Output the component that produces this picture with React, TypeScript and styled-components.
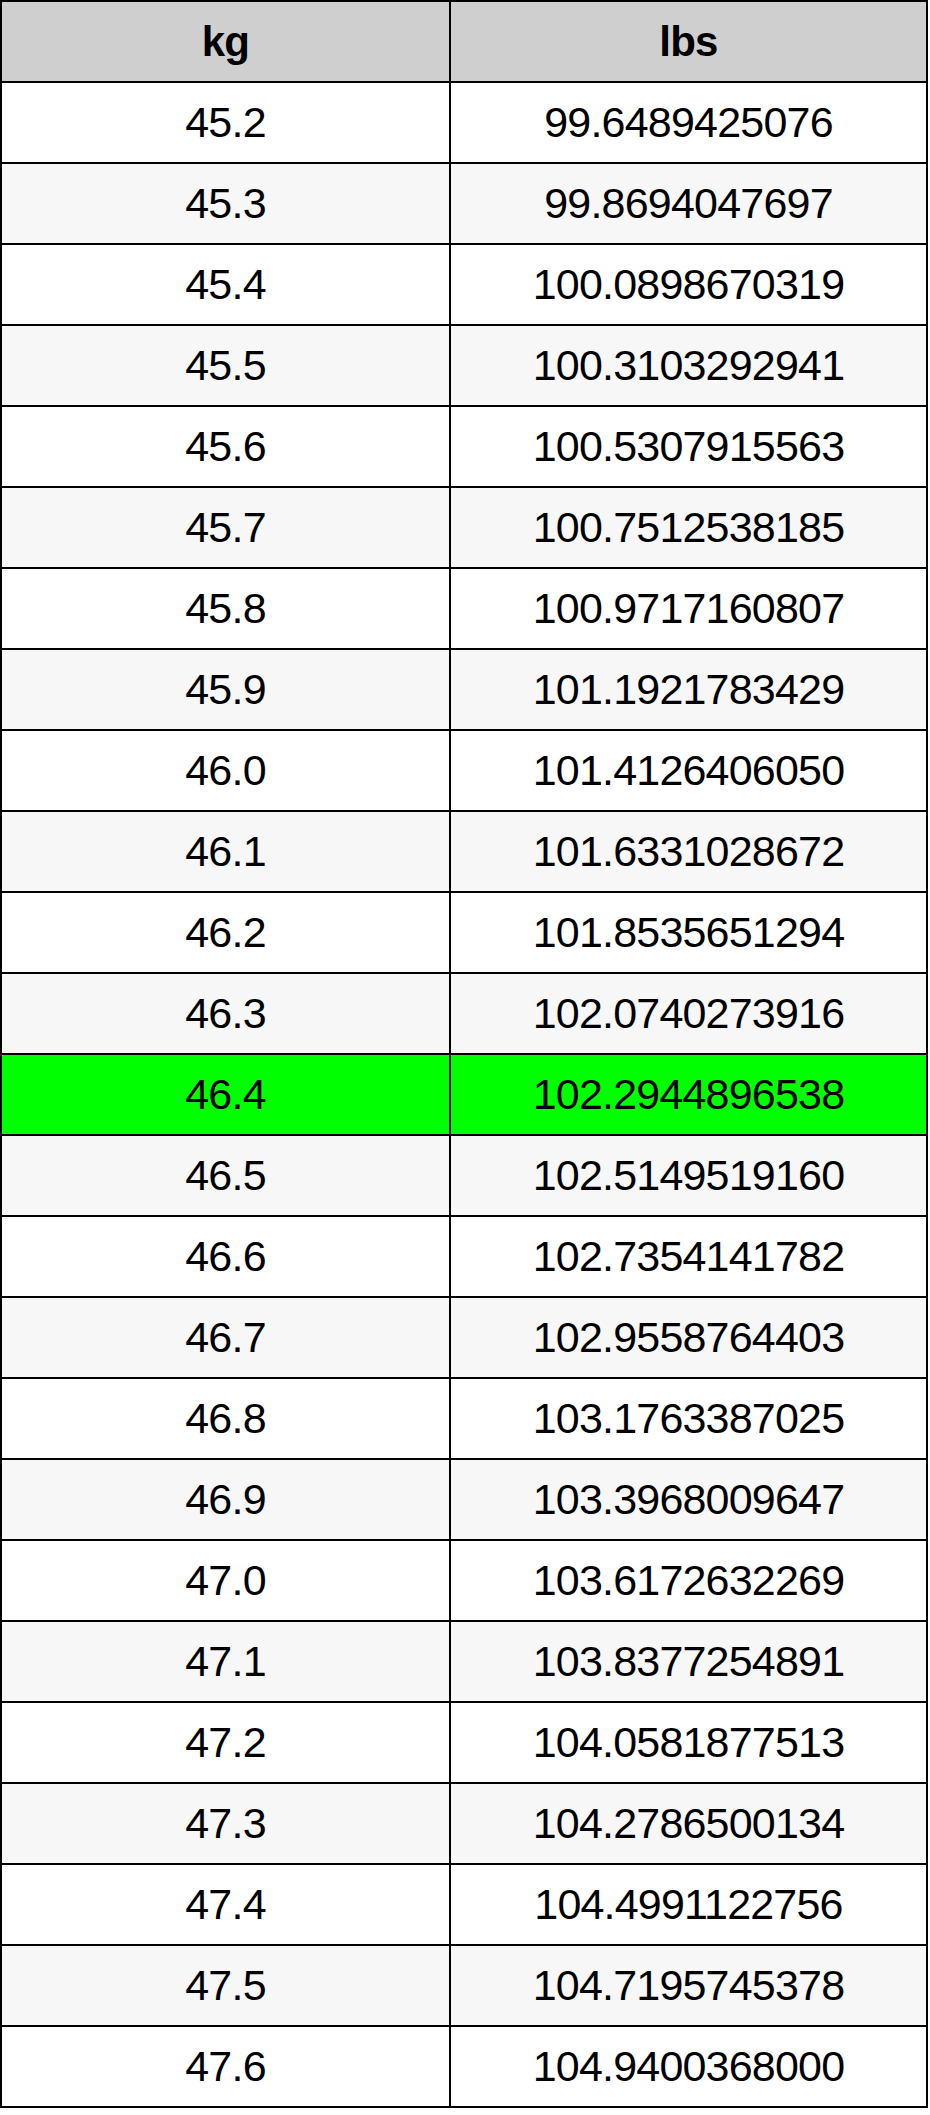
import styled, { createGlobalStyle } from "styled-components";

const GlobalStyle = createGlobalStyle`
    body {
        margin: 0;
        background: #ffffff;
        font-family: "Liberation Sans", Arial, sans-serif;
    }
`;

const rows: [string, string][] = [
    ["45.2", "99.6489425076"],
    ["45.3", "99.8694047697"],
    ["45.4", "100.0898670319"],
    ["45.5", "100.3103292941"],
    ["45.6", "100.5307915563"],
    ["45.7", "100.7512538185"],
    ["45.8", "100.9717160807"],
    ["45.9", "101.1921783429"],
    ["46.0", "101.4126406050"],
    ["46.1", "101.6331028672"],
    ["46.2", "101.8535651294"],
    ["46.3", "102.0740273916"],
    ["46.4", "102.2944896538"],
    ["46.5", "102.5149519160"],
    ["46.6", "102.7354141782"],
    ["46.7", "102.9558764403"],
    ["46.8", "103.1763387025"],
    ["46.9", "103.3968009647"],
    ["47.0", "103.6172632269"],
    ["47.1", "103.8377254891"],
    ["47.2", "104.0581877513"],
    ["47.3", "104.2786500134"],
    ["47.4", "104.4991122756"],
    ["47.5", "104.7195745378"],
    ["47.6", "104.9400368000"],
];

const HIGHLIGHT = "46.4";

const App = () => {
    return (
        <>
            <GlobalStyle />
            <Table>
                <colgroup>
                    <col style={{ width: 449 }} />
                    <col />
                </colgroup>
                <thead>
                    <tr>
                        <HeadCell>kg</HeadCell>
                        <HeadCell>lbs</HeadCell>
                    </tr>
                </thead>
                <tbody>
                    {rows.map(([kg, lbs], index) => (
                        <Row key={kg} striped={index % 2 === 1} active={kg === HIGHLIGHT}>
                            <Cell>{kg}</Cell>
                            <Cell>{lbs}</Cell>
                        </Row>
                    ))}
                </tbody>
            </Table>
        </>
    );
};

export default App;

const Table = styled.table`
    width: 928px;
    table-layout: fixed;
    border-collapse: separate;
    border-spacing: 0;
    border-top: 2px solid #000;
    border-left: 2px solid #000;
`;

const HeadCell = styled.th`
    height: 79px;
    padding: 0;
    background-color: #cfcfcf;
    border-right: 2px solid #000;
    border-bottom: 2px solid #000;
    font-size: 42px;
    letter-spacing: -0.8px;
    font-weight: bold;
    color: #000;
    text-align: center;
    vertical-align: middle;
`;

const Row = styled.tr<{ striped: boolean; active: boolean }>`
    background-color: ${(props) => (props.active ? "#00ff00" : props.striped ? "#f7f7f7" : "#ffffff")};
`;

const Cell = styled.td`
    height: 79px;
    padding: 0;
    border-right: 2px solid #000;
    border-bottom: 2px solid #000;
    font-size: 43px;
    letter-spacing: -0.8px;
    color: #000;
    text-align: center;
    vertical-align: middle;
`;
